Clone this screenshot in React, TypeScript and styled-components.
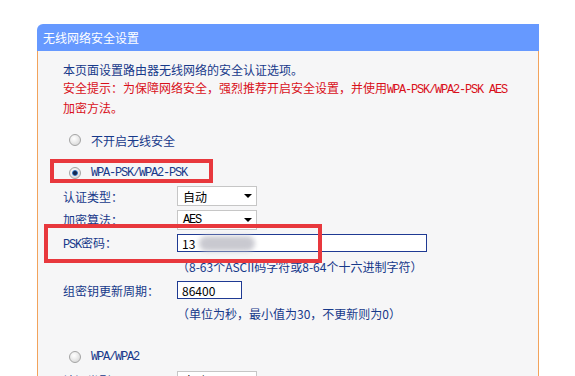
import React from "react";
import styled, { createGlobalStyle } from "styled-components";

const GlobalStyle = createGlobalStyle`
  html, body {
    margin: 0;
    padding: 0;
    background: #ffffff;
    overflow: hidden;
  }
  body {
    font-family: "Noto Sans CJK SC", "Liberation Sans", sans-serif;
    font-size: 12px;
  }
`;

const navy = "#17398a";
const red = "#d9101a";
const mark = "#e8383d";

const Page = styled.div`
  position: relative;
  box-sizing: border-box;
  height: 376px;
  overflow: hidden;
  padding: 24px 0 0 37px;
`;

const Panel = styled.div`
  width: 502px;
`;

const Header = styled.div`
  height: 27px;
  line-height: 27px;
  background: #6699ff;
  color: #ffffff;
  border-top-left-radius: 6px;
  padding-left: 6px;
  font-size: 12px;
`;

const Body = styled.div`
  background: #f6f6f7;
  border-left: 1px solid #f2a35c;
  border-right: 1px solid #f2a35c;
  padding: 10px 0 80px 25px;
`;

const Intro = styled.p<{ $warn?: boolean }>`
  margin: 0;
  line-height: 18px;
  color: ${(p) => (p.$warn ? red : navy)};
`;

const Mono = styled.span`
  font-family: "Liberation Mono", monospace;
  font-size: 12px;
  letter-spacing: -1.2px;
`;

const RadioRow = styled.label<{ $top: number }>`
  display: flex;
  align-items: center;
  gap: 10px;
  height: 18px;
  margin-top: ${(p) => p.$top}px;
  padding-left: 6px;
  color: ${navy};
`;

const Radio = styled.span<{ $checked?: boolean }>`
  position: relative;
  box-sizing: border-box;
  width: 12px;
  height: 12px;
  border-radius: 50%;
  border: 1px solid #a4a4a4;
  background: radial-gradient(circle at 40% 35%, #ffffff 0, #f0f0f0 35%, #cfcfcf 100%);
  &::after {
    content: "";
    display: ${(p) => (p.$checked ? "block" : "none")};
    position: absolute;
    left: 2px;
    top: 2px;
    width: 6px;
    height: 6px;
    border-radius: 50%;
    background: radial-gradient(circle, #13284f 0 1.5px, #2f6cb8 2.5px, #6aa3dc 3px);
  }
`;

const FormGrid = styled.div<{ $top: number }>`
  display: grid;
  grid-template-columns: 114px auto;
  grid-auto-rows: 23.5px;
  align-items: center;
  margin-top: ${(p) => p.$top}px;
  color: ${navy};
`;

const Label = styled.span`
  grid-column: 1;
`;

const Hint = styled.span`
  grid-column: 2;
  color: ${navy};
`;

const Select = styled.div`
  box-sizing: border-box;
  width: 80px;
  height: 20px;
  border: 1px solid #c6c6c6;
  background: #ffffff;
  display: flex;
  align-items: center;
  justify-content: space-between;
  padding: 0 4px 0 5px;
  color: #000000;
`;

const Arrow = styled.span`
  width: 0;
  height: 0;
  border-left: 4px solid transparent;
  border-right: 4px solid transparent;
  border-top: 4px solid #000000;
`;

const TextBox = styled.div<{ $w: number }>`
  box-sizing: border-box;
  width: ${(p) => p.$w}px;
  height: 18px;
  border: 1px solid #1f3a93;
  background: #ffffff;
  display: flex;
  align-items: center;
  padding-left: 4px;
  color: #000000;
`;

const Blur = styled.span`
  display: inline-block;
  width: 56px;
  height: 15px;
  margin-left: 4px;
  border-radius: 8px;
  background: #c9c9d0;
  filter: blur(2.5px);
`;

const Mark = styled.div<{ $x: number; $y: number; $w: number; $h: number }>`
  position: absolute;
  box-sizing: border-box;
  left: ${(p) => p.$x}px;
  top: ${(p) => p.$y}px;
  width: ${(p) => p.$w}px;
  height: ${(p) => p.$h}px;
  border: 4px solid ${mark};
  pointer-events: none;
`;

export default function App() {
  return (
    <>
      <GlobalStyle />
      <Page>
        <Panel>
          <Header>无线网络安全设置</Header>
          <Body>
            <Intro>本页面设置路由器无线网络的安全认证选项。</Intro>
            <Intro $warn>
              安全提示：为保障网络安全，强烈推荐开启安全设置，并使用<Mono>WPA-PSK/WPA2-PSK AES</Mono>
            </Intro>
            <Intro $warn>加密方法。</Intro>

            <RadioRow $top={14}>
              <Radio />
              不开启无线安全
            </RadioRow>
            <RadioRow $top={15}>
              <Radio $checked />
              <Mono>WPA-PSK/WPA2-PSK</Mono>
            </RadioRow>

            <FormGrid $top={2.5}>
              <Label>认证类型：</Label>
              <Select>
                自动
                <Arrow />
              </Select>
              <Label>加密算法：</Label>
              <Select>
                <Mono>AES</Mono>
                <Arrow />
              </Select>
              <Label>
                <Mono>PSK</Mono>密码：
              </Label>
              <TextBox $w={250}>
                13
                <Blur />
              </TextBox>
              <Hint>（8-63个ASCII码字符或8-64个十六进制字符）</Hint>
              <Label>组密钥更新周期：</Label>
              <TextBox $w={65}>86400</TextBox>
              <Hint>（单位为秒，最小值为30，不更新则为0）</Hint>
            </FormGrid>

            <RadioRow $top={22.5}>
              <Radio />
              <Mono>WPA/WPA2</Mono>
            </RadioRow>
            <FormGrid $top={3}>
              <Label>认证类型：</Label>
              <Select>
                自动
                <Arrow />
              </Select>
            </FormGrid>
          </Body>
        </Panel>
        <Mark $x={50} $y={159} $w={163} $h={24} />
        <Mark $x={44} $y={224} $w={278} $h={39} />
      </Page>
    </>
  );
}
